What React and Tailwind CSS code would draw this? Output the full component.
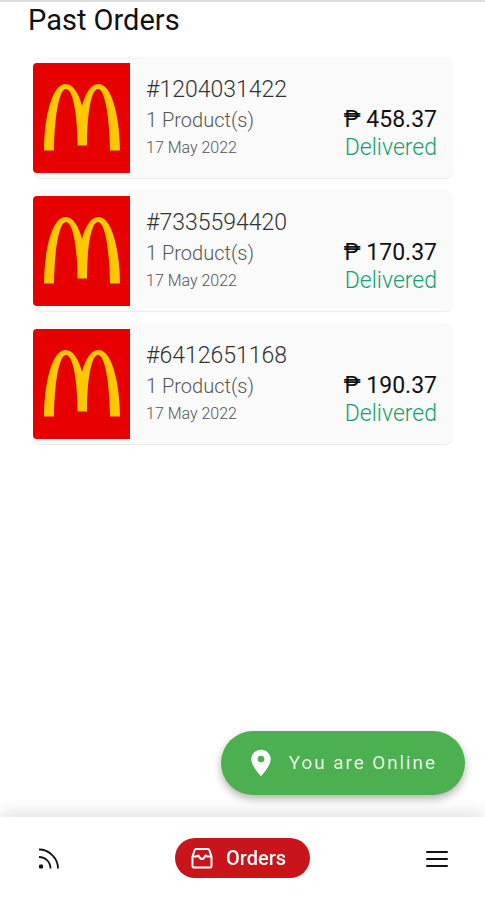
const orders = [
    { id: "#1204031422", products: 1, date: "17 May 2022", total: "458.37", status: "Delivered" },
    { id: "#7335594420", products: 1, date: "17 May 2022", total: "170.37", status: "Delivered" },
    { id: "#6412651168", products: 1, date: "17 May 2022", total: "190.37", status: "Delivered" },
];

function StoreLogo() {
    return (
        <svg viewBox="0 0 97 110" className="my-1 w-[97px] h-[110px] shrink-0 rounded-l-sm" role="img" aria-label="McDonald's">
            <rect width="97" height="110" fill="#e60000" />
            <path
                fill="#ffc800"
                d="M11 87.500C11.500 50 20 21 32.500 21C40 21 45.500 30 49 43C52.500 30 58 21 65.500 21C78 21 86.500 50 87 87.500H77C76.500 54 72 26 65 26C58 26 54 52 54 82.500H44.500C44.500 52 40 26 33 26C26 26 21.500 54 21 87.500Z"
            />
        </svg>
    );
}

function OrderCard({ order }) {
    return (
        <li className="flex items-center rounded-lg bg-[#fafafa] pt-0.5 pb-px shadow-[0_1px_1px_rgba(0,0,0,0.08)]">
            <StoreLogo />
            <div className="flex flex-1 items-end justify-between px-4">
                <div className="font-light">
                    <p className="text-[23px] leading-8 text-[#333]">{order.id}</p>
                    <p className="text-xl leading-7 text-[#555]">{order.products} Product(s)</p>
                    <p className="text-base leading-7 text-[#555]">{order.date}</p>
                </div>
                <div className="text-right">
                    <p className="text-[23px] leading-7 text-[#111]">₱ {order.total}</p>
                    <p className="text-[23px] leading-7 font-light text-[#0fa36b]">{order.status}</p>
                </div>
            </div>
        </li>
    );
}

function RssIcon() {
    return (
        <svg viewBox="0 0 24 24" className="size-6" fill="none" stroke="#111" strokeWidth="1.8" aria-hidden="true">
            <path d="M3 3.500C13 3.500 22 12 22 22.500" />
            <path d="M3 11C9.500 11 14.500 16 14.500 22.500" />
            <rect x="3" y="18.500" width="4" height="4" rx="1.200" fill="#111" stroke="none" />
        </svg>
    );
}

function InboxIcon() {
    return (
        <svg viewBox="0 0 24 24" className="size-6" fill="none" stroke="#fff" strokeWidth="2" strokeLinejoin="round" strokeLinecap="round" aria-hidden="true">
            <path d="M6 3H18Q19 3 19.300 4L21.500 10.500V20Q21.500 21.500 20 21.500H4Q2.500 21.500 2.500 20V10.500L4.700 4Q5 3 6 3Z" />
            <path d="M3 10.500H6.500L8.500 9.500Q10 13 12 13T15.500 9.500L17.500 10.500H21" />
        </svg>
    );
}

export default function App() {
    return (
        <div className="flex min-h-screen flex-col border-t-2 border-[#dcdcdc] bg-white font-[Roboto,sans-serif]">
            <main className="flex-1 pb-44">
                <h1 className="px-7 text-[29px] leading-9 text-[#111]">Past Orders</h1>
                <ul className="mt-[19px] flex flex-col gap-3 pl-[33px] pr-8">
                    {orders.map((order) => (
                        <OrderCard key={order.id} order={order} />
                    ))}
                </ul>
            </main>

            <div className="fixed inset-x-0 bottom-0">
                {/* Availability toggle */}
                <div className="flex justify-end px-5 pb-[22px]">
                    <button
                        type="button"
                        className="flex h-16 items-center gap-3 rounded-full bg-[#4caf50] pl-6 pr-7 text-[19px] tracking-widest text-[#e9f7e9] shadow-[0_4px_8px_rgba(0,0,0,0.3)]"
                    >
                        <svg viewBox="0 0 24 24" className="size-8" fill="#fff" aria-hidden="true">
                            <path d="M12 2C8.130 2 4.700 5.130 4.700 9c0 5.250 7.300 13 7.300 13s7.300-7.750 7.300-13c0-3.870-3.430-7-7.300-7zm0 9.500a2.500 2.500 0 0 1 0-5 2.500 2.500 0 0 1 0 5z" />
                        </svg>
                        You are Online
                    </button>
                </div>

                <nav className="flex items-center justify-between bg-white px-9 pt-[21px] pb-[22px] shadow-[0_-4px_16px_rgba(0,0,0,0.12)]">
                    <a href="#feed" aria-label="Feed">
                        <RssIcon />
                    </a>
                    <a href="#orders" aria-current="page" className="flex h-10 items-center gap-3 rounded-full bg-[#c8141b] pl-[15px] pr-6 text-xl font-medium text-white">
                        <InboxIcon />
                        Orders
                    </a>
                    <button type="button" aria-label="Menu">
                        <svg viewBox="0 0 24 24" className="size-6" fill="none" stroke="#111" strokeWidth="2" strokeLinecap="round" aria-hidden="true">
                            <path d="M2 6H22M2 13H22M2 20H22" />
                        </svg>
                    </button>
                </nav>
            </div>
        </div>
    );
}
